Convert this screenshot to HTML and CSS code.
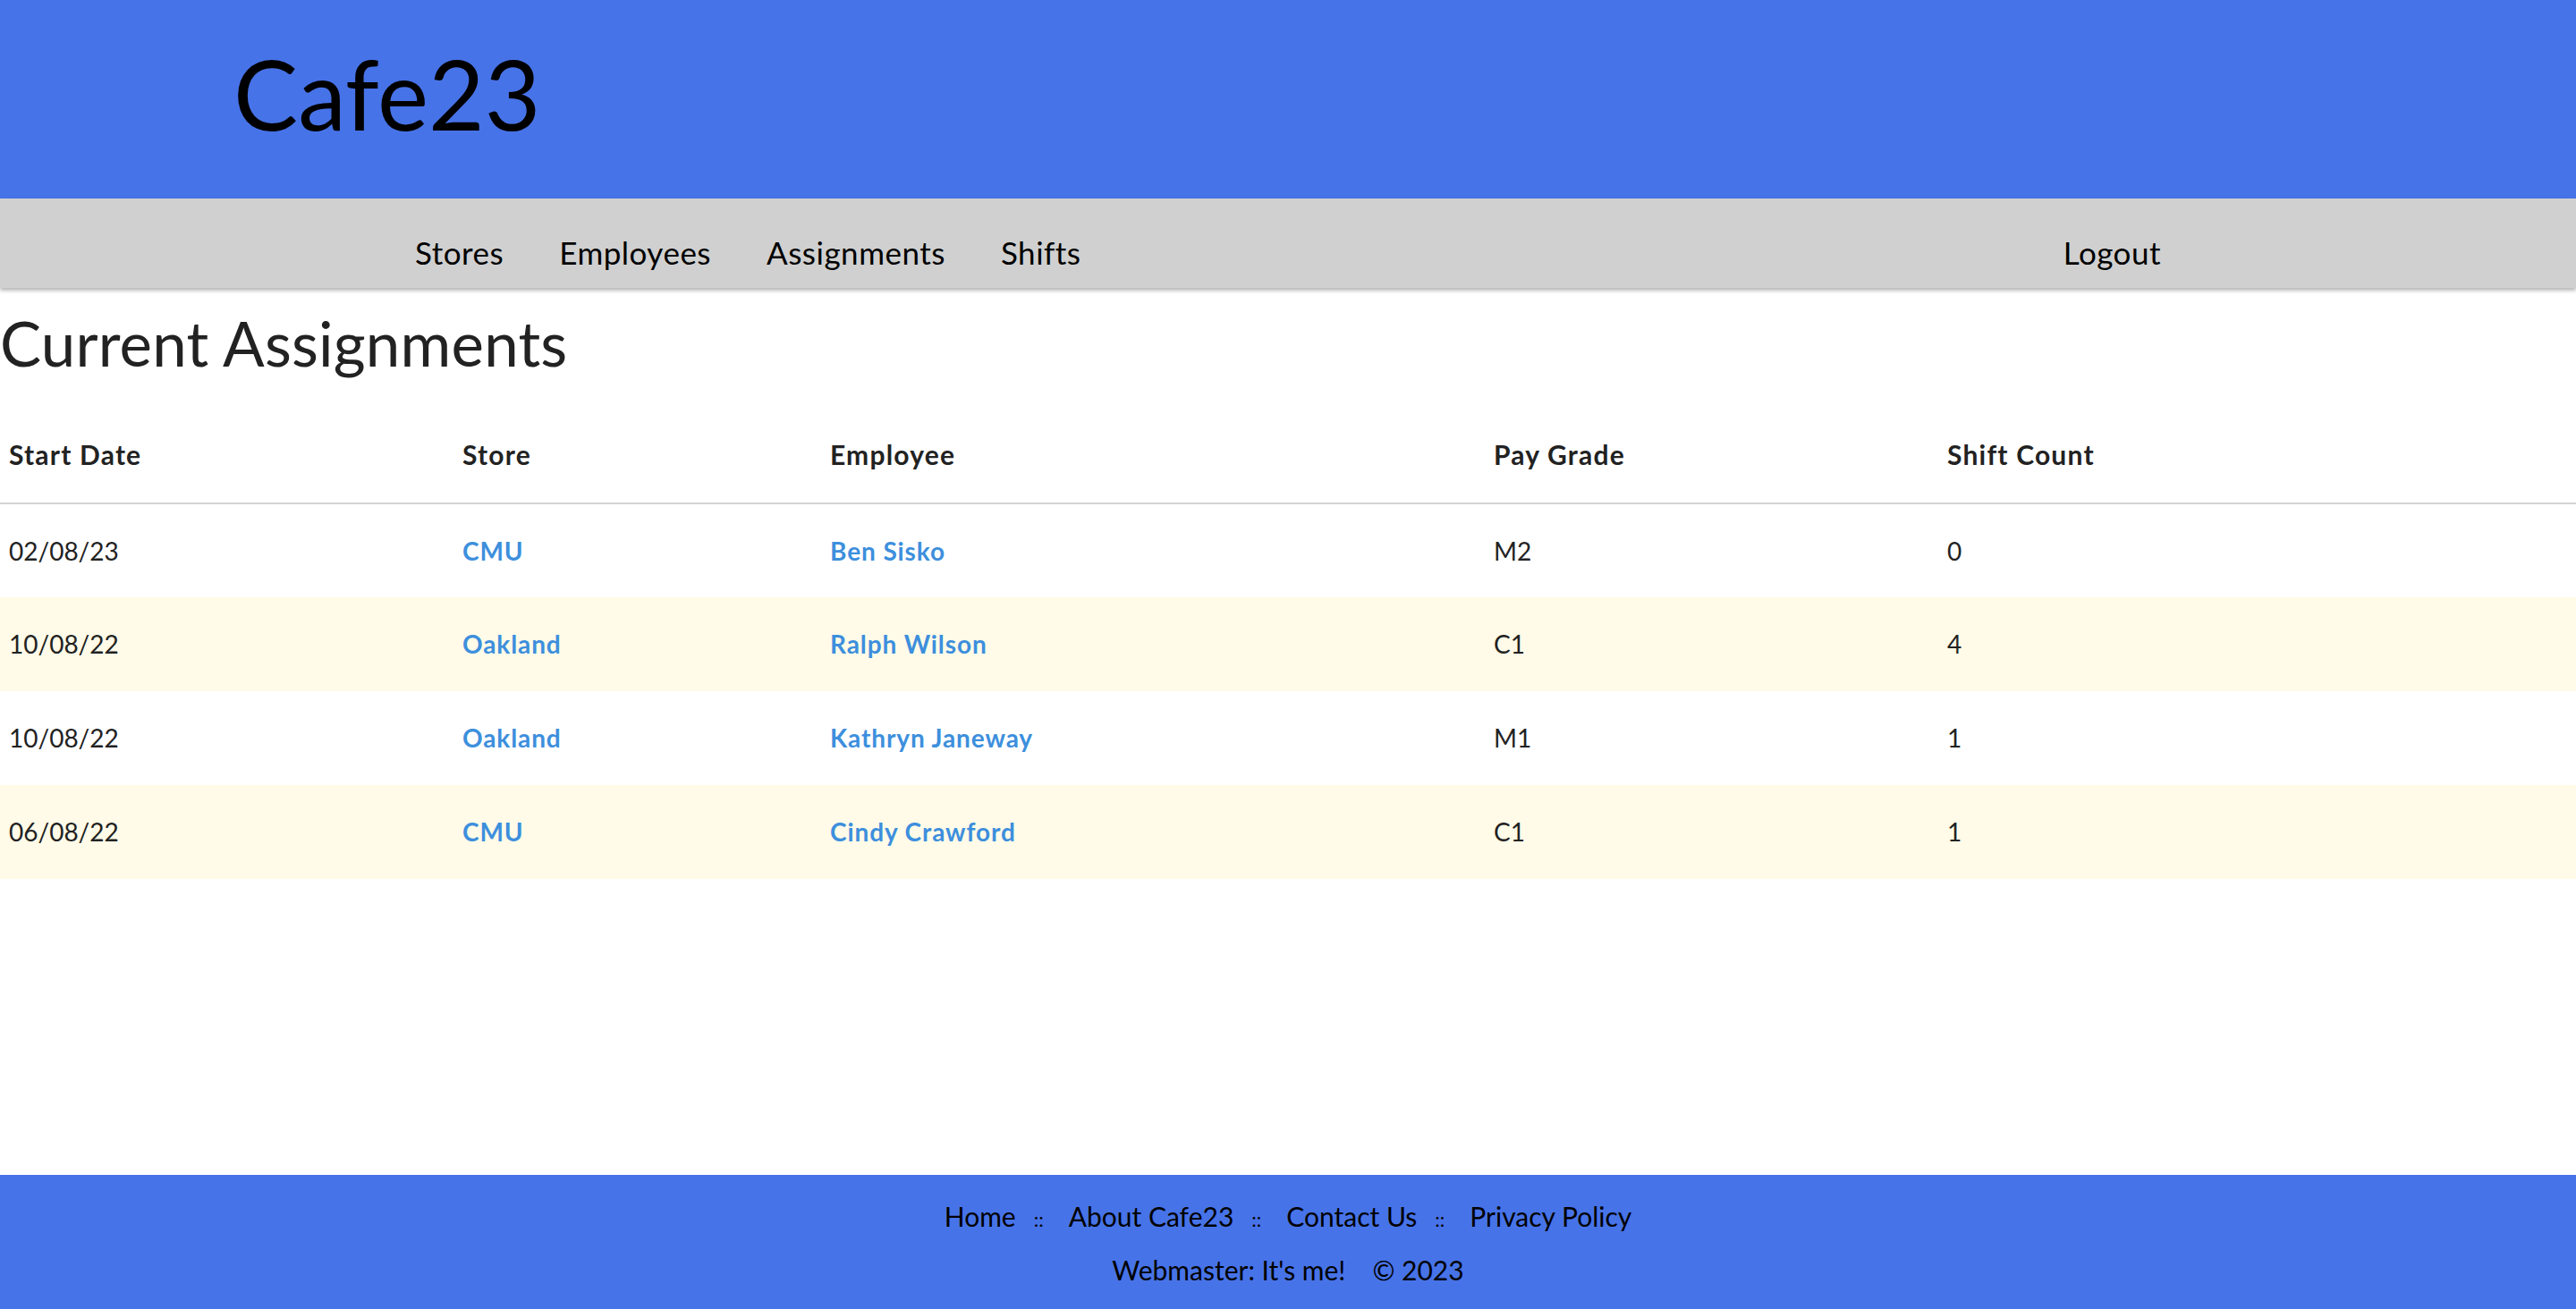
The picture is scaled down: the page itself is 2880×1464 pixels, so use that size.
FILE: index.html
```html
<!DOCTYPE html>
<html lang="en">
<head>
<meta charset="utf-8">
<title>Cafe23 - Current Assignments</title>
<link rel="stylesheet" href="styles.css">
</head>
<body>
<header class="masthead">
  <h1 class="brand">Cafe23</h1>
</header>
<nav class="topnav">
  <div class="topnav-inner">
    <ul class="nav-links">
      <li><a href="#">Stores</a></li>
      <li><a href="#">Employees</a></li>
      <li><a href="#">Assignments</a></li>
      <li><a href="#">Shifts</a></li>
    </ul>
    <a class="logout" href="#">Logout</a>
  </div>
</nav>
<main class="content">
  <h2 class="page-title">Current Assignments</h2>
  <table class="data-table">
    <colgroup>
      <col class="c-date">
      <col class="c-store">
      <col class="c-emp">
      <col class="c-grade">
      <col class="c-count">
    </colgroup>
    <thead>
      <tr>
        <th>Start Date</th>
        <th>Store</th>
        <th>Employee</th>
        <th>Pay Grade</th>
        <th>Shift Count</th>
      </tr>
    </thead>
    <tbody>
      <tr>
        <td>02/08/23</td>
        <td><a href="#">CMU</a></td>
        <td><a href="#">Ben Sisko</a></td>
        <td>M2</td>
        <td>0</td>
      </tr>
      <tr class="alt">
        <td>10/08/22</td>
        <td><a href="#">Oakland</a></td>
        <td><a href="#">Ralph Wilson</a></td>
        <td>C1</td>
        <td>4</td>
      </tr>
      <tr>
        <td>10/08/22</td>
        <td><a href="#">Oakland</a></td>
        <td><a href="#">Kathryn Janeway</a></td>
        <td>M1</td>
        <td>1</td>
      </tr>
      <tr class="alt">
        <td>06/08/22</td>
        <td><a href="#">CMU</a></td>
        <td><a href="#">Cindy Crawford</a></td>
        <td>C1</td>
        <td>1</td>
      </tr>
    </tbody>
  </table>
</main>
<footer class="site-footer">
  <p class="footer-links">
    <a href="#">Home</a><span class="sep">::</span><a href="#">About Cafe23</a><span class="sep">::</span><a href="#">Contact Us</a><span class="sep">::</span><a href="#">Privacy Policy</a>
  </p>
  <p class="footer-credit">
    <span>Webmaster: It's me!</span><span class="copy">&copy; 2023</span>
  </p>
</footer>
</body>
</html>
```
FILE: styles.css
```css
* { box-sizing: border-box; }

html, body {
  margin: 0;
  padding: 0;
}

body {
  font-family: Lato, "Noto Sans", sans-serif;
  color: #222;
  background: #fff;
  min-height: 100vh;
  display: flex;
  flex-direction: column;
}

a { text-decoration: none; }

/* Header */
.masthead {
  background: #4773e8;
  height: 222px;
  padding: 40px 0 0 261px;
}

.brand {
  margin: 0;
  font-size: 108px;
  font-weight: 400;
  line-height: 1.2;
  color: #000;
}

/* Navigation */
.topnav {
  background: #d0d0d0;
  height: 100px;
  box-shadow: 0 3px 4px rgba(0, 0, 0, 0.28);
  position: relative;
  z-index: 1;
}

.topnav-inner {
  width: 2000px;
  margin: 0 auto;
  padding: 39px 24px 0;
  display: flex;
  justify-content: space-between;
}

.nav-links {
  list-style: none;
  margin: 0;
  padding: 0;
  display: flex;
  gap: 62px;
}

.topnav a {
  font-size: 35px;
  line-height: 1.2;
  letter-spacing: 0.5px;
  color: #000;
}

/* Main */
.content {
  flex: 1;
}

.page-title {
  margin: 21px 0 0;
  padding-left: 0;
  font-size: 69px;
  font-weight: 400;
  line-height: 1.2;
  letter-spacing: 0.2px;
  color: #222;
}

.data-table {
  width: 100%;
  margin-top: 28px;
  border-collapse: collapse;
  table-layout: fixed;
  font-size: 28px;
}

.c-date { width: 507px; }
.c-store { width: 411px; }
.c-emp { width: 742px; }
.c-grade { width: 507px; }
.c-count { width: auto; }

.data-table th {
  text-align: left;
  font-weight: 700;
  font-size: 30px;
  letter-spacing: 1.2px;
  height: 109px;
  padding: 0 0 0 10px;
  vertical-align: middle;
  border-bottom: 2px solid #d3d3d3;
  color: #222;
}

.data-table td {
  height: 105px;
  padding: 0 0 0 10px;
  vertical-align: middle;
  color: #222;
}

.data-table tr.alt td {
  background: #fffbe8;
}

.data-table td a {
  color: #3d8fdd;
  font-weight: 700;
  letter-spacing: 0.9px;
}

/* Footer */
.site-footer {
  background: #4773e8;
  height: 150px;
  padding-top: 28px;
  text-align: center;
  color: #000;
  font-size: 30px;
}

.site-footer p {
  margin: 0;
  line-height: 1.2;
}

.footer-credit {
  margin-top: 24px !important;
}

.site-footer a {
  color: #000;
}

.sep {
  font-size: 22px;
  margin: 0 28px 0 20px;
}

.copy {
  margin-left: 30px;
}
```
